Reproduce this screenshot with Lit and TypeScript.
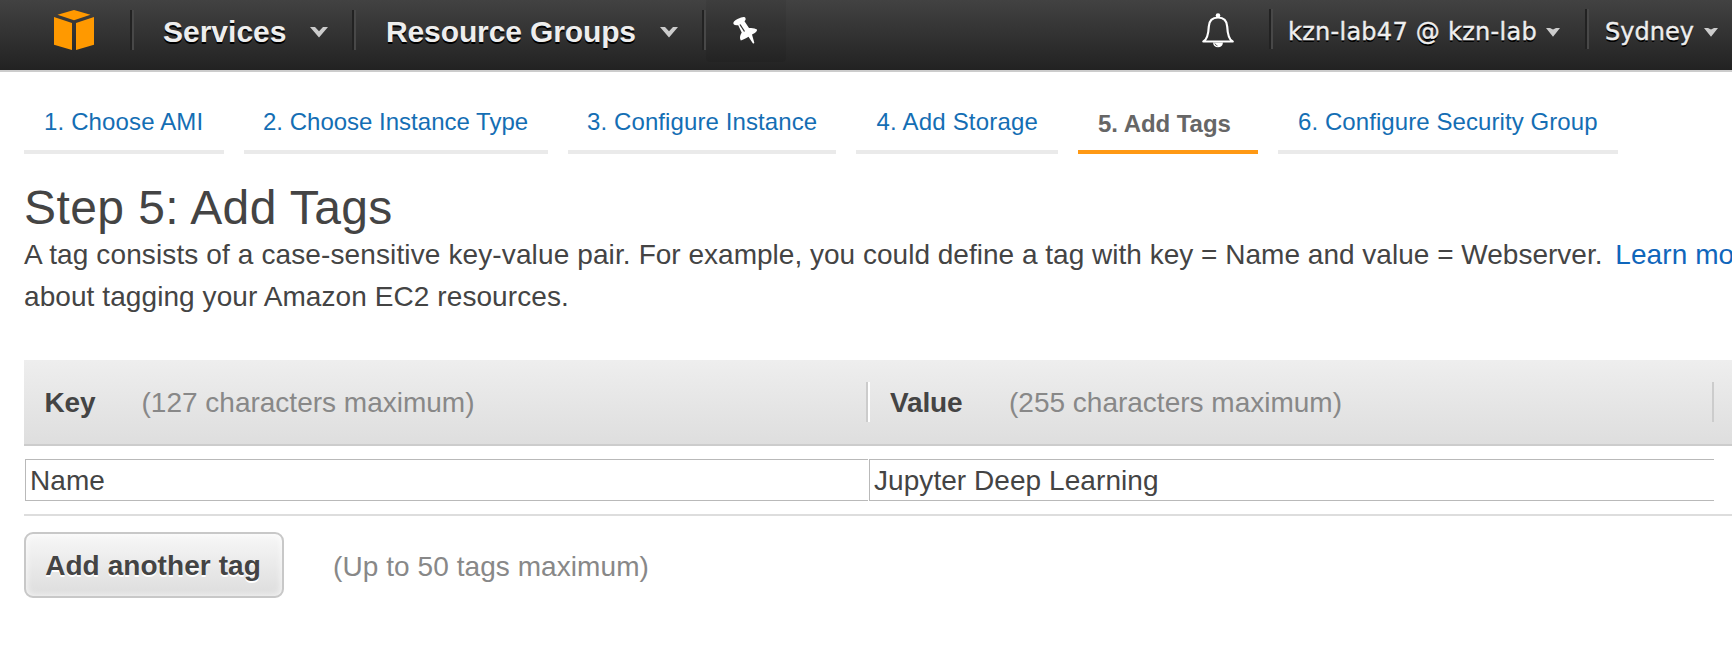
import { LitElement, html, css, svg } from 'lit';
import { customElement, property } from 'lit/decorators.js';
import { classMap } from 'lit/directives/class-map.js';

const bigCaret = svg`<svg class="caret big" width="18" height="11" viewBox="0 0 18 11"><path d="M0 0H5L9 4.2L13 0H18L9 10.5Z" fill="#ccc"/></svg>`;
const smallCaret = svg`<svg class="caret" width="14" height="9" viewBox="0 0 14 9"><path d="M0 0H4L7 1.6L10 0H14L7 8.7Z" fill="#ccc"/></svg>`;

@customElement('console-nav')
class ConsoleNav extends LitElement {
  static styles = css`
    :host {
      display: block;
      height: 70px;
      border-bottom: 2px solid #ccc;
      background: linear-gradient(#424242, #222);
      color: #eee;
      text-shadow: 0 2px 0 #000;
    }
    .bar { display: flex; align-items: center; height: 63px; line-height: 63px; white-space: nowrap; }
    .side { display: flex; align-items: center; }
    .right { margin-left: auto; font: 24px/63px "DejaVu Sans", Verdana, sans-serif; }
    .main { font-size: 30px; font-weight: bold; }
    .sep { flex: none; width: 2px; height: 40px; background: #222; border-right: 2px solid #484848; align-self: flex-start; margin-top: 10px; }
    svg { display: block; flex: none; }
    .logo { margin: 0 36px 0 54px; align-self: flex-start; padding-top: 10px; }
    .services { margin: 0 25px 0 29px; width: 122px; }
    .groups { margin: 0 23px 0 30px; width: 251px; letter-spacing: -0.12px; }
    .caret { margin-top: 1px; }
    .caret.big { margin: 2px 24px 0 0; }
    .pin { display: flex; width: 80px; height: 62px; background: rgba(0, 0, 0, 0.06); border-radius: 0 0 4px 4px; align-self: flex-start; }
    .pin svg { margin: 16px 0 0 26px; }
    .bell { margin: 14px 35px 0 0; align-self: flex-start; }
    .user, .region { padding-top: 2px; -webkit-text-stroke: 0.4px #eee; }
    .user { margin: 0 9px 0 15px; width: 249px; letter-spacing: 0.27px; }
    .region { margin: 0 10px 0 16px; width: 89px; }
    .userCaret { margin-right: 25px; }
    .regionCaret { margin-right: 14px; }
  `;
  render() {
    return html`<div class="bar">
      <div class="side main">
        <svg class="logo" width="40" height="40" viewBox="0 0 40 40" fill="#ff9900">
          <path d="M20 0L36.5 4.8L20 10.2L3.5 4.8Z"/>
          <path d="M0 7L18 13V40L0 34.8Z"/>
          <path d="M40 7L22 13V40L40 34.8Z"/>
        </svg>
        <i class="sep"></i>
        <span class="services">Services</span>${bigCaret}
        <i class="sep"></i>
        <span class="groups">Resource Groups</span>${bigCaret}
        <i class="sep"></i>
        <span class="pin">
          <svg width="26" height="29" viewBox="0 0 26 29">
            <path d="M1.5 8Q.5 5.5 5.500 3Q11 .2 13 1.200Q14.500 3.500 12.500 5.200L17 12Q22.500 11.500 25 13.500Q25.500 16 20 18.600L22.300 26.800Q22 28 20.800 27.200L16.500 20.800Q11 24 8.800 24.500Q6.800 21.500 9.700 16.600L6.200 9.200Q2.500 9.600 1.500 8Z" fill="#fff"/>
            <path d="M8 8.500L12.500 15.500" stroke="#333" stroke-width="1.300" fill="none"/>
          </svg>
        </span>
      </div>
      <div class="side right">
        <svg class="bell" width="32" height="36" viewBox="0 0 32 36">
          <circle cx="16" cy="2.500" r="2.300" fill="#fff"/>
          <path d="M1.300 28.500C5.500 26.500 6.500 20 6.800 13.500C7.200 7.500 10.500 4.500 16 4.500S24.800 7.500 25.200 13.500C25.500 20 26.500 26.500 30.700 28.500Z" fill="none" stroke="#fff" stroke-width="2.200" stroke-linejoin="round"/>
          <path d="M11 29.500H21Q20.500 34.300 16 34.300T11 29.500Z" fill="#fff"/>
          <path d="M12.800 30.500Q13.500 32.500 15.500 32.800" stroke="#555" stroke-width=".9" fill="none"/>
        </svg>
        <i class="sep"></i>
        <span class="user">kzn-lab47 @ kzn-lab</span><span class="userCaret">${smallCaret}</span>
        <i class="sep"></i>
        <span class="region">Sydney</span><span class="regionCaret">${smallCaret}</span>
      </div>
    </div>`;
  }
}

@customElement('wizard-steps')
class WizardSteps extends LitElement {
  @property({ type: Number }) current = 5;
  static styles = css`
    :host { display: flex; gap: 20px; padding: 36px 0 0 24px; font-size: 24px; line-height: 28px; white-space: nowrap; }
    .step { box-sizing: border-box; padding: 0 0 14px 20px; border-bottom: 4px solid #eaeaea; color: #146eb4; letter-spacing: 0.08px; }
    .s1 { width: 200px; letter-spacing: 0.14px; }
    .s2 { width: 304px; padding-left: 19px; letter-spacing: 0; }
    .s3 { width: 268px; padding-left: 19px; letter-spacing: 0.1px; }
    .s4 { width: 202px; padding-left: 20.500px; letter-spacing: 0.2px; }
    .s5 { width: 180px; }
    .s6 { width: 340px; }
    .current { padding-top: 2px; padding-bottom: 12px; border-color: #ff9914; color: #666; font-weight: bold; letter-spacing: -0.05px; }
  `;
  steps = ['Choose AMI', 'Choose Instance Type', 'Configure Instance', 'Add Storage', 'Add Tags', 'Configure Security Group'];
  render() {
    return this.steps.map((s, i) => html`<div class=${classMap({ step: true, ['s' + (i + 1)]: true, current: i + 1 === this.current })}>${i + 1}. ${s}</div>`);
  }
}

@customElement('tag-table')
class TagTable extends LitElement {
  static styles = css`
    :host { display: block; margin: 42px 0 0 24px; }
    .head, .row { display: grid; grid-template-columns: 844px 846px 1fr; align-items: center; }
    .head { height: 84px; border-bottom: 2px solid #ccc; background: linear-gradient(#eee, #dedede); }
    .cell { display: flex; align-items: center; box-sizing: border-box; height: 40px; }
    .cell span { padding-top: 1px; }
    .key { padding-left: 20.500px; border-right: 2px solid #ccc; }
    .value { padding-left: 20px; border-left: 2px solid #fff; border-right: 2px solid #ccc; }
    .name { font-weight: bold; letter-spacing: -0.15px; }
    .key .name { width: 97px; }
    .value .name { width: 119px; }
    .limit { color: #888; }
    .row { height: 68px; border-bottom: 2px solid #ddd; }
    .field { box-sizing: border-box; height: 42px; line-height: 41px; border: solid #b9b9b9; border-width: 1px 0 1px 1px; padding-left: 4px; margin-left: 1px; letter-spacing: 0.06px; }
  `;
  render() {
    return html`
      <div class="head">
        <div class="cell key"><span class="name">Key</span><span class="limit">(127 characters maximum)</span></div>
        <div class="cell value"><span class="name">Value</span><span class="limit">(255 characters maximum)</span></div>
      </div>
      <div class="row">
        <div class="field">Name</div>
        <div class="field">Jupyter Deep Learning</div>
      </div>`;
  }
}

@customElement('app-root')
class AppRoot extends LitElement {
  static styles = css`
    :host { display: block; height: 648px; overflow: hidden; background: #fff; color: #444; font: 28px "Liberation Sans", Arial, sans-serif; }
    h1 { margin: 28px 0 0 24px; font-size: 48px; line-height: 51px; font-weight: normal; letter-spacing: 0.42px; }
    p { margin: 1px 0 0 24px; line-height: 42px; letter-spacing: 0.08px; white-space: nowrap; }
    .lead { letter-spacing: 0.12px; }
    .example { letter-spacing: 0.013px; }
    a { color: #0f66bb; margin-left: 5px; }
    .actions { display: flex; align-items: center; gap: 49px; margin: 16px 0 0 24px; color: #888; }
    button {
      box-sizing: border-box; width: 260px; height: 66px; padding: 2px 2px 0 0;
      border: 2px solid #c8c8c8; border-radius: 9px;
      background: linear-gradient(#f7f7f7, #ddd);
      box-shadow: inset 0 0 6px 1px rgba(255, 255, 255, 0.7);
      font: bold 28px "Liberation Sans", Arial, sans-serif; letter-spacing: 0.07px; color: #444; text-shadow: 0 2px 0 #fff;
    }
    .note { letter-spacing: 0.07px; padding-top: 3px; }
  `;
  render() {
    return html`
      <console-nav></console-nav>
      <wizard-steps .current=${5}></wizard-steps>
      <h1>Step 5: Add Tags</h1>
      <p><span class="lead">A tag consists of a case-sensitive key-value pair. </span><span class="example">For example, you could define a tag with key = Name and value = Webserver. </span><a>Learn more</a><br>about tagging your Amazon EC2 resources.</p>
      <tag-table></tag-table>
      <div class="actions"><button>Add another tag</button><span class="note">(Up to 50 tags maximum)</span></div>`;
  }
}
